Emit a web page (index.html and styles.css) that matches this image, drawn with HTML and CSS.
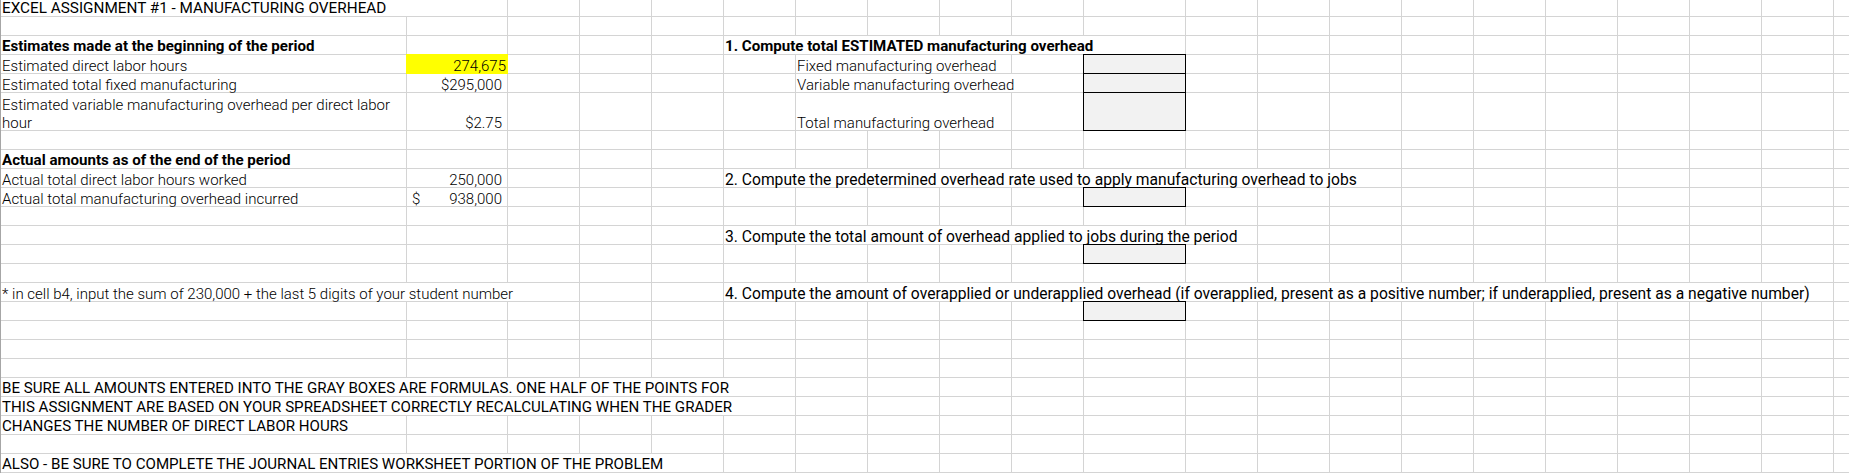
FILE: index.html
```html
<!DOCTYPE html>
<html lang="en">
<head>
<meta charset="utf-8">
<title>Excel Assignment #1 - Manufacturing Overhead</title>
<link rel="stylesheet" href="styles.css">
</head>
<body>
<div class="sheet">
  <div class="row r1"><div class="t s2">EXCEL ASSIGNMENT #1 - MANUFACTURING OVERHEAD</div><i></i><i></i><i></i><i></i><i></i><i></i><i></i><i></i><i></i><i></i><i></i><i></i><i></i><i></i><i></i><i></i><i></i><i></i><i></i></div>
  <div class="row"><i></i><i></i><i></i><i></i><i></i><i></i><i></i><i></i><i></i><i></i><i></i><i></i><i></i><i></i><i></i><i></i><i></i><i></i><i></i><i></i><i></i></div>
  <div class="row"><div class="hb">Estimates made at the beginning of the period</div><i></i><i></i><i></i><i></i><div class="hb s6">1. Compute total ESTIMATED manufacturing overhead</div><i></i><i></i><i></i><i></i><i></i><i></i><i></i><i></i><i></i><i></i></div>
  <div class="row"><div class="b">Estimated direct labor hours</div><div class="b num yel">274,675</div><i></i><i></i><i></i><i></i><div class="b s3">Fixed manufacturing overhead</div><i></i><div class="box"></div><i></i><i></i><i></i><i></i><i></i><i></i><i></i><i></i><i></i><i></i></div>
  <div class="row"><div class="b">Estimated total fixed manufacturing</div><div class="b num">$295,000</div><i></i><i></i><i></i><i></i><div class="b s4">Variable manufacturing overhead</div><div class="box"></div><i></i><i></i><i></i><i></i><i></i><i></i><i></i><i></i><i></i><i></i></div>
  <div class="row tall"><div class="b wrapc"><span class="wl">Estimated variable manufacturing overhead per direct labor<br>hour</span></div><div class="b num">$2.75</div><i></i><i></i><i></i><i></i><div class="b s3">Total manufacturing overhead</div><i></i><div class="box"></div><i></i><i></i><i></i><i></i><i></i><i></i><i></i><i></i><i></i><i></i></div>
  <div class="row"><i></i><i></i><i></i><i></i><i></i><i></i><i></i><i></i><i></i><i></i><i></i><i></i><i></i><i></i><i></i><i></i><i></i><i></i><i></i><i></i><i></i></div>
  <div class="row"><div class="hb">Actual amounts as of the end of the period</div><i></i><i></i><i></i><i></i><i></i><i></i><i></i><i></i><i></i><i></i><i></i><i></i><i></i><i></i><i></i><i></i><i></i><i></i><i></i><i></i></div>
  <div class="row"><div class="b">Actual total direct labor hours worked</div><div class="b num">250,000</div><i></i><i></i><i></i><div class="q s9">2. Compute the predetermined overhead rate used to apply manufacturing overhead to jobs</div><i></i><i></i><i></i><i></i><i></i><i></i><i></i></div>
  <div class="row"><div class="b">Actual total manufacturing overhead incurred</div><div class="b acct"><span>$</span><span>938,000</span></div><i></i><i></i><i></i><i></i><i></i><i></i><i></i><i></i><div class="box"></div><i></i><i></i><i></i><i></i><i></i><i></i><i></i><i></i><i></i><i></i></div>
  <div class="row"><i></i><i></i><i></i><i></i><i></i><i></i><i></i><i></i><i></i><i></i><i></i><i></i><i></i><i></i><i></i><i></i><i></i><i></i><i></i><i></i><i></i></div>
  <div class="row"><i></i><i></i><i></i><i></i><i></i><div class="q s7">3. Compute the total amount of overhead applied to jobs during the period</div><i></i><i></i><i></i><i></i><i></i><i></i><i></i><i></i><i></i></div>
  <div class="row"><i></i><i></i><i></i><i></i><i></i><i></i><i></i><i></i><i></i><i></i><div class="box"></div><i></i><i></i><i></i><i></i><i></i><i></i><i></i><i></i><i></i><i></i></div>
  <div class="row"><i></i><i></i><i></i><i></i><i></i><i></i><i></i><i></i><i></i><i></i><i></i><i></i><i></i><i></i><i></i><i></i><i></i><i></i><i></i><i></i><i></i></div>
  <div class="row"><div class="b s3">* in cell b4, input the sum of 230,000 + the last 5 digits of your student number</div><i></i><i></i><div class="q s15">4. Compute the amount of overapplied or underapplied overhead (if overapplied, present as a positive number; if underapplied, present as a negative number)</div><i></i></div>
  <div class="row"><i></i><i></i><i></i><i></i><i></i><i></i><i></i><i></i><i></i><i></i><div class="box"></div><i></i><i></i><i></i><i></i><i></i><i></i><i></i><i></i><i></i><i></i></div>
  <div class="row"><i></i><i></i><i></i><i></i><i></i><i></i><i></i><i></i><i></i><i></i><i></i><i></i><i></i><i></i><i></i><i></i><i></i><i></i><i></i><i></i><i></i></div>
  <div class="row"><i></i><i></i><i></i><i></i><i></i><i></i><i></i><i></i><i></i><i></i><i></i><i></i><i></i><i></i><i></i><i></i><i></i><i></i><i></i><i></i><i></i></div>
  <div class="row"><i></i><i></i><i></i><i></i><i></i><i></i><i></i><i></i><i></i><i></i><i></i><i></i><i></i><i></i><i></i><i></i><i></i><i></i><i></i><i></i><i></i></div>
  <div class="row"><div class="h s6">BE SURE ALL AMOUNTS ENTERED INTO THE GRAY BOXES ARE FORMULAS. ONE HALF OF THE POINTS FOR</div><i></i><i></i><i></i><i></i><i></i><i></i><i></i><i></i><i></i><i></i><i></i><i></i><i></i><i></i><i></i></div>
  <div class="row"><div class="h s6">THIS ASSIGNMENT ARE BASED ON YOUR SPREADSHEET CORRECTLY RECALCULATING WHEN THE GRADER</div><i></i><i></i><i></i><i></i><i></i><i></i><i></i><i></i><i></i><i></i><i></i><i></i><i></i><i></i><i></i></div>
  <div class="row"><div class="h">CHANGES THE NUMBER OF DIRECT LABOR HOURS</div><i></i><i></i><i></i><i></i><i></i><i></i><i></i><i></i><i></i><i></i><i></i><i></i><i></i><i></i><i></i><i></i><i></i><i></i><i></i><i></i></div>
  <div class="row"><i></i><i></i><i></i><i></i><i></i><i></i><i></i><i></i><i></i><i></i><i></i><i></i><i></i><i></i><i></i><i></i><i></i><i></i><i></i><i></i><i></i></div>
  <div class="row"><div class="h s5">ALSO - BE SURE TO COMPLETE THE JOURNAL ENTRIES WORKSHEET PORTION OF THE PROBLEM</div><i></i><i></i><i></i><i></i><i></i><i></i><i></i><i></i><i></i><i></i><i></i><i></i><i></i><i></i><i></i><i></i></div>
</div>
</body>
</html>
```
FILE: styles.css
```css
html, body {
  margin: 0;
  padding: 0;
  background: #ffffff;
  overflow: hidden;
}

.sheet {
  width: 1849px;
  border-left: 1px solid #a6a6a6;
  font-family: Roboto, "Liberation Sans", Arial, sans-serif;
  color: #000000;
}

.row {
  display: grid;
  grid-template-columns: 406px 101px repeat(8, 72px) 102px repeat(9, 72px) 16px;
  height: 19px;
}

.row.r1 { height: 17px; }
.row.tall { height: 38px; }

.row > * {
  box-sizing: border-box;
  min-width: 0;
  display: flex;
  align-items: flex-end;
  padding: 0 1px;
  border-right: 1px solid #d4d4d4;
  border-bottom: 1px solid #d4d4d4;
  white-space: nowrap;
  font-style: normal;
}

.s2 { grid-column: span 2; }
.s3 { grid-column: span 3; }
.s4 { grid-column: span 4; }
.s5 { grid-column: span 5; }
.s6 { grid-column: span 6; }
.s7 { grid-column: span 7; }
.s9 { grid-column: span 9; }
.s15 { grid-column: span 15; }

.t {
  font-size: 15.3px;
  line-height: 15px;
}

.hb {
  font-size: 15.1px;
  font-weight: 700;
  line-height: 15px;
}

.h {
  font-size: 15.1px;
  line-height: 15px;
}

.q {
  font-size: 15.65px;
  line-height: 15px;
}

.b {
  font-size: 15px;
  font-weight: 300;
  line-height: 14px;
}

.num {
  justify-content: flex-end;
  padding-right: 5px;
}

.acct {
  justify-content: space-between;
  padding: 0 5px;
}

.yel {
  background: #ffff00;
  border-right-color: #ffff00;
  border-bottom-color: #ffff00;
  margin: -1px 0 0 -1px;
  padding-right: 1px;
}

.box {
  background: #f2f2f2;
  border: 1px solid #000000;
  margin: -1px 0 0 -1px;
}

.wrapc {
  white-space: normal;
}

.wl {
  line-height: 18px;
  margin-bottom: -2px;
}
```
